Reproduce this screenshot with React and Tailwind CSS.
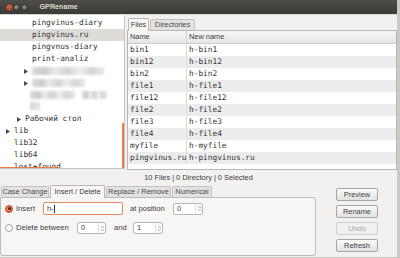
import React from "react";

const sans = "font-['Liberation_Sans',Arial,sans-serif]";
const mono = "font-['DejaVu_Sans_Mono','Liberation_Mono',monospace]";

const blurBg =
  "bg-[linear-gradient(90deg,#dadada,#c6c6c6_18%,#e8e8e8_32%,#cdcdcd_50%,#eeeeee_66%,#d0d0d0_82%,#e6e6e6)]";

const leftRows = [
  { label: "pingvinus-diary", pl: "pl-[32px]" },
  { label: "pingvinus.ru", pl: "pl-[32px]", selected: true },
  { label: "pingvnus-diary", pl: "pl-[32px]" },
  { label: "print-analiz", pl: "pl-[32px]" },
  { blur: ["w-[72px]"], pl: "pl-[24px]", arrow: true },
  { blur: ["w-[53px]"], pl: "pl-[24px]", arrow: true },
  { blur: ["w-[45px]", "w-[25px]"], pl: "pl-[30px]" },
  { blur: ["w-[10px]"], pl: "pl-[30px]", top: true },
  { label: "Рабочий стол", pl: "pl-[17px]", arrow: true },
  { label: "lib", pl: "pl-[6px]", arrow: true },
  { label: "lib32", pl: "pl-[14px]" },
  { label: "lib64", pl: "pl-[14px]" },
  { label: "lost+found", pl: "pl-[14px]" },
];

const files = [
  ["bin1", "h-bin1"],
  ["bin12", "h-bin12"],
  ["bin2", "h-bin2"],
  ["file1", "h-file1"],
  ["file12", "h-file12"],
  ["file2", "h-file2"],
  ["file3", "h-file3"],
  ["file4", "h-file4"],
  ["myfile", "h-myfile"],
  ["pingvinus.ru", "h-pingvinus.ru"],
];

const Arrow = () => (
  <span className="w-[8px] shrink-0 flex items-center">
    <svg width="4" height="5" viewBox="0 0 4 5">
      <path d="M0 0 L4 2.5 L0 5 Z" fill="#4a4a4a" />
    </svg>
  </span>
);

const TitleButton = ({ close }) => (
  <div
    className={`w-[7px] h-[7px] rounded-full flex items-center justify-center ${
      close
        ? "bg-[radial-gradient(circle_at_40%_35%,#f89b6c,#e05a24_70%)] border-[0.5px] border-[#9c3a12]"
        : "bg-[radial-gradient(circle_at_40%_35%,#9b9890,#5f5d58_70%)] border-[0.5px] border-[#2e2d2a]"
    }`}
  >
    {close ? (
      <svg width="3" height="3" viewBox="0 0 3 3">
        <path d="M0.3 0.3 L2.7 2.7 M2.7 0.3 L0.3 2.7" stroke="#3a1a0c" strokeWidth="0.8" />
      </svg>
    ) : null}
  </div>
);

const Tab = ({ label, active, w }) => (
  <div
    className={`${w} flex items-center justify-center text-[7.4px] rounded-t-[2px] border border-b-0 ${
      active
        ? "h-[13px] bg-[#f7f6f5] border-[#b8b6b2] text-[#3c3c3c] relative z-10 -mb-px"
        : "h-[11px] bg-[#e3e2e0] border-[#c4c2be] text-[#4a4a4a]"
    }`}
  >
    {label}
  </div>
);

const Radio = ({ checked }) =>
  checked ? (
    <div className="w-[8px] h-[8px] rounded-full bg-[radial-gradient(circle_at_45%_40%,#f7a47c,#e0602c_75%)] border-[0.5px] border-[#b4491d] flex items-center justify-center">
      <div className="w-[3px] h-[3px] rounded-full bg-[#4a2413]" />
    </div>
  ) : (
    <div className="w-[8px] h-[8px] rounded-full bg-white border border-[#a3a19d]" />
  );

const Spin = ({ value, w }) => (
  <div className={`${w} h-[12px] flex bg-white border border-[#b9b7b3] rounded-[2px]`}>
    <div className="flex-1 flex items-center pl-[3px] text-[7.4px]">{value}</div>
    <div className="w-[7px] flex flex-col items-center justify-center gap-[1px] border-l border-[#e2e1df]">
      <svg width="3" height="2" viewBox="0 0 3 2">
        <path d="M0 2 L1.5 0 L3 2" fill="none" stroke="#8a8884" strokeWidth="0.6" />
      </svg>
      <svg width="3" height="2" viewBox="0 0 3 2">
        <path d="M0 0 L1.5 2 L3 0" fill="none" stroke="#8a8884" strokeWidth="0.6" />
      </svg>
    </div>
  </div>
);

const Button = ({ label, disabled }) => (
  <div
    className={`h-[13px] flex items-center justify-center rounded-[2px] border text-[7.4px] ${
      disabled
        ? "border-[#d2d0cc] bg-[#f1f0ef] text-[#a9a7a3]"
        : "border-[#a8a6a2] bg-gradient-to-b from-[#fbfbfa] to-[#e2e1df] text-[#3c3c3c]"
    }`}
  >
    {label}
  </div>
);

export default function App() {
  return (
    <div
      className={`w-[400px] h-[258px] overflow-hidden flex flex-col bg-[#f2f1f0] text-[#3c3c3c] border-r-[3px] border-[#cbc9c5] ${sans}`}
    >
      {/* title bar */}
      <div className="h-[14px] shrink-0 flex items-center bg-gradient-to-b from-[#4e4d49] to-[#3b3a36] pl-[6px]">
        <TitleButton close />
        <TitleButton />
        <div className="ml-[0.5px]">
          <TitleButton />
        </div>
        <span className="ml-[12px] text-[7.2px] font-bold text-[#dfdbd2]">GPRename</span>
      </div>

      {/* panes */}
      <div className="h-[157px] shrink-0 flex border-t border-[#d9d7d3]">
        <div className="w-[125px] shrink-0 mb-[2px] relative overflow-hidden bg-white border-r border-b border-[#c6c4c0] pt-[2px]">
          {leftRows.map((r, i) => (
            <div
              key={i}
              className={`h-[12px] flex ${r.top ? "items-start pt-[1px]" : "items-center"} ${r.pl} ${
                r.selected ? "bg-[#dedcd9]" : ""
              }`}
            >
              {r.arrow && <Arrow />}
              {r.label && (
                <span className={`${mono} text-[7.8px] text-[#333] whitespace-nowrap`}>{r.label}</span>
              )}
              {r.blur && (
                <div className="flex gap-[7px]">
                  {r.blur.map((w, j) => (
                    <div key={j} className={`${w} h-[8px] ${blurBg} blur-[0.8px] opacity-90`} />
                  ))}
                </div>
              )}
            </div>
          ))}
          <div className="absolute right-0 top-[108px] w-[2px] h-[48px] bg-[#ef7a46]" />
          <div className="absolute left-0 bottom-0 w-[60px] h-[1.5px] bg-[#ef7a46]" />
        </div>

        <div className="flex-1 ml-[2px] flex flex-col pt-[2px]">
          <div className="h-[13px] flex items-end pl-[1px] gap-[1px]">
            <Tab label="Files" active w="w-[21px]" />
            <Tab label="Directories" w="w-[45px]" />
          </div>
          <div className="flex-1 mb-[1px] border border-[#b8b6b2] bg-white overflow-hidden">
            <div className="h-[13px] flex text-[7.4px] bg-gradient-to-b from-[#f8f7f6] to-[#e7e6e4] border-b border-[#cfcdc9]">
              <div className="w-[59px] flex items-center pl-[2px] border-r border-[#d6d4d0]">Name</div>
              <div className="flex-1 flex items-center pl-[2px]">New name</div>
            </div>
            {files.map(([a, b], i) => (
              <div
                key={a}
                className={`h-[12px] flex ${mono} text-[7.8px] text-[#333] ${
                  i % 2 === 1 ? "bg-[#ececec]" : "bg-white"
                }`}
              >
                <div className="w-[59px] flex items-center pl-[2px] border-r border-[#dedede] whitespace-nowrap">
                  {a}
                </div>
                <div className="flex-1 flex items-center pl-[2px] whitespace-nowrap">{b}</div>
              </div>
            ))}
          </div>
        </div>
      </div>

      {/* status */}
      <div className="h-[14px] shrink-0 flex items-center justify-center text-[7.4px] text-[#3c3c3c]">
        10 Files | 0 Directory | 0 Selected
      </div>

      {/* bottom */}
      <div className="flex-1 flex border-b border-[#c4c2be]">
        <div className="w-[316px] flex flex-col">
          <div className="h-[12px] flex items-end gap-[1px] pl-[1px]">
            <Tab label="Case Change" w="w-[48px]" />
            <Tab label="Insert / Delete" active w="w-[55px]" />
            <Tab label="Replace / Remove" w="w-[65px]" />
            <Tab label="Numerical" w="w-[40px]" />
          </div>
          <div className="flex-1 mb-[1px] border border-[#bdbbb7] rounded-tr-[3px] rounded-b-[3px] bg-[#f7f6f5] pt-[4px] pl-[4px] flex flex-col gap-[7px]">
            <div className="h-[13px] flex items-center text-[7.6px]">
              <Radio checked />
              <span className="ml-[3px] w-[27px]">Insert</span>
              <div className="w-[80px] h-[13px] flex items-center pl-[3px] bg-white border border-[#e5885e] rounded-[2px]">
                <span>h-</span>
                <span className="w-[1px] h-[8px] bg-[#333] ml-[0.5px]" />
              </div>
              <span className="ml-[7px] w-[43px]">at position</span>
              <Spin value="0" w="w-[30px]" />
            </div>
            <div className="h-[12px] flex items-center text-[7.6px]">
              <Radio />
              <span className="ml-[3px] w-[61px]">Delete between</span>
              <Spin value="0" w="w-[29px]" />
              <span className="ml-[8px] w-[19px]">and</span>
              <Spin value="1" w="w-[30px]" />
            </div>
          </div>
        </div>
        <div className="ml-[20px] w-[42px] pt-[3px] flex flex-col gap-[4px]">
          <Button label="Preview" />
          <Button label="Rename" />
          <Button label="Undo" disabled />
          <Button label="Refresh" />
        </div>
      </div>
    </div>
  );
}
